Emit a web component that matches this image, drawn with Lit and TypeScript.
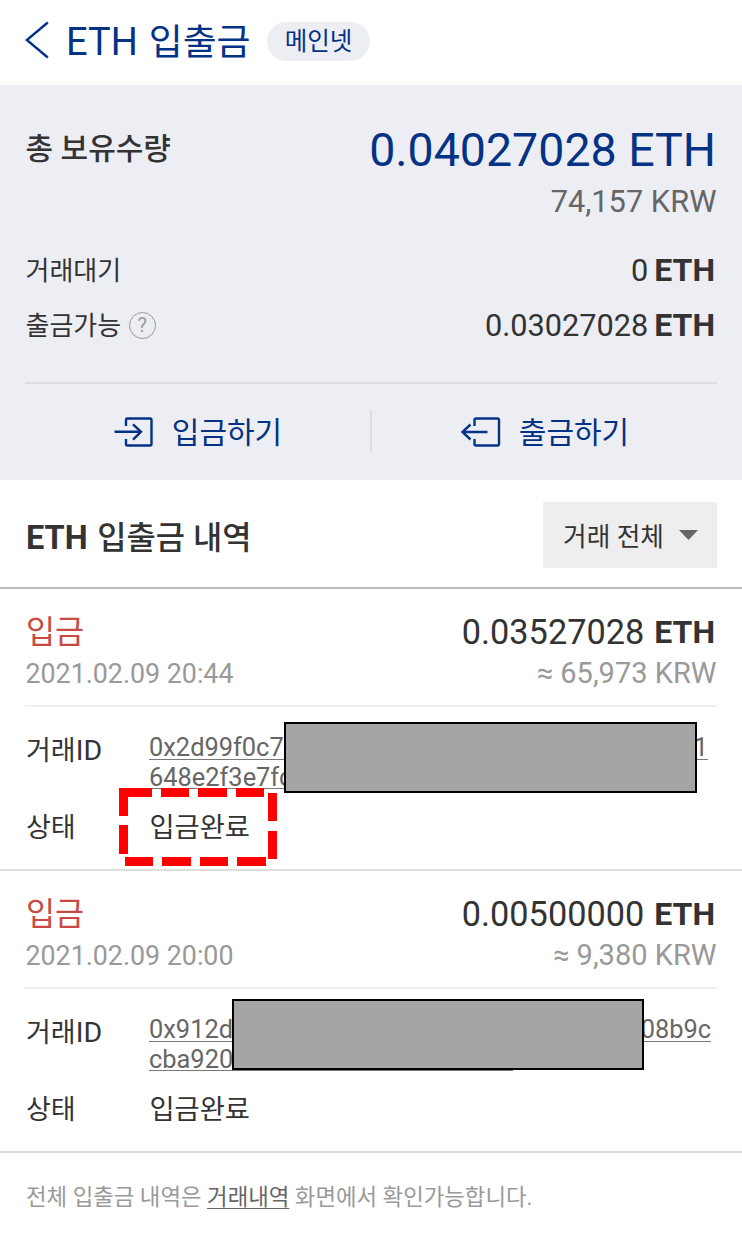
import { LitElement, html, css, svg } from "lit";
import { customElement, property } from "lit/decorators.js";

interface Transfer {
  kind: string;
  time: string;
  amount: string;
  krw: string;
  idHead: string;
  idTail: string;
  idRest: string;
  status: string;
  mask: "first" | "second";
  marked: boolean;
}

const transfers: Transfer[] = [
  {
    kind: "입금",
    time: "2021.02.09 20:44",
    amount: "0.03527028",
    krw: "≈ 65,973 KRW",
    idHead: "0x2d99f0c7",
    idTail: "1",
    idRest: "648e2f3e7fc",
    status: "입금완료",
    mask: "first",
    marked: true,
  },
  {
    kind: "입금",
    time: "2021.02.09 20:00",
    amount: "0.00500000",
    krw: "≈ 9,380 KRW",
    idHead: "0x912d",
    idTail: "08b9c",
    idRest: "cba920",
    status: "입금완료",
    mask: "second",
    marked: false,
  },
];

const base = css`
  * {
    box-sizing: border-box;
  }
  :host {
    display: block;
    font-family: Roboto, "Noto Sans CJK KR", sans-serif;
    color: #333;
  }
  .unit {
    font-weight: 700;
    font-size: 32px;
  }
`;

@customElement("transfer-item")
export class TransferItem extends LitElement {
  @property({ attribute: false }) item!: Transfer;

  static styles = [
    base,
    css`
      .item {
        position: relative;
        height: 282px;
        padding: 0 25px;
        border-bottom: 2px solid #ddd;
      }
      .head {
        height: 118px;
        padding-top: 23px;
        border-bottom: 2px solid #eee;
      }
      .line {
        display: flex;
        justify-content: space-between;
        white-space: nowrap;
      }
      .main {
        height: 40px;
        line-height: 40px;
      }
      .sub {
        height: 42px;
        line-height: 42px;
        color: #999;
      }
      .kind {
        font-size: 31.6px;
        line-height: 42px;
        color: #c84a43;
        padding-left: 1px;
      }
      .amount {
        display: flex;
        gap: 10px;
        font-size: 34.3px;
        line-height: 41px;
        padding-right: 2px;
      }
      .time {
        font-size: 26.8px;
        line-height: 44px;
        padding-left: 0.5px;
      }
      .krw {
        font-size: 29px;
        padding-right: 0.5px;
      }
      .detail {
        display: grid;
        grid-template-columns: 124px 1fr;
        white-space: nowrap;
      }
      .label {
        font-size: 27px;
        line-height: 41px;
        padding-left: 1px;
      }
      .label .latin {
        font-size: 28.5px;
      }
      .id {
        padding-top: 23px;
        height: 100px;
      }
      .hash {
        font-size: 25.4px;
        color: #666;
      }
      .row {
        display: flex;
        justify-content: space-between;
        height: 29.5px;
        line-height: 35px;
        border-bottom: 1.3px solid #777;
      }
      .row.first {
        width: 559px;
      }
      .row.second {
        width: 562px;
      }
      .row.rest {
        width: 364px;
      }
      .state .label,
      .value {
        line-height: 42px;
      }
      .value {
        font-size: 27.3px;
        padding-left: 0.5px;
      }
      .mask {
        position: absolute;
        height: 71px;
        border: 2px solid #000;
        background: #a5a5a5;
      }
      .mask.first {
        left: 284px;
        top: 133px;
        width: 413px;
      }
      .mask.second {
        left: 232px;
        top: 128px;
        width: 412px;
      }
      .mark {
        position: absolute;
        left: 119px;
        top: 199px;
      }
    `,
  ];

  render() {
    const t = this.item;
    return html`
      <article class="item">
        <div class="head">
          <div class="line main">
            <span class="kind">${t.kind}</span>
            <span class="amount"><span>${t.amount}</span><span class="unit">ETH</span></span>
          </div>
          <div class="line sub">
            <span class="time">${t.time}</span><span class="krw">${t.krw}</span>
          </div>
        </div>
        <div class="detail id">
          <span class="label">거래<span class="latin">ID</span></span>
          <div class="hash">
            <div class="row ${t.mask}"><span>${t.idHead}</span><span>${t.idTail}</span></div>
            <div class="row rest"><span>${t.idRest}</span></div>
          </div>
        </div>
        <div class="detail state">
          <span class="label">상태</span><span class="value">${t.status}</span>
        </div>
        <div class="mask ${t.mask}"></div>
        ${t.marked
          ? html`<svg class="mark" width="158" height="78" viewBox="0 0 158 78">
              <path
                fill="#f00"
                d="M0 0H33V9H9V28H0ZM42 0H70V9H42ZM79 0H108V9H79ZM117 0H145V9H117ZM149 5H158V33H149ZM149 43H158V71H149ZM118 69H147V78H118ZM81 69H109V78H81ZM43 69H72V78H43ZM6 69H34V78H6ZM0 37H9V66H0Z"
              />
            </svg>`
          : null}
      </article>
    `;
  }
}

@customElement("app-root")
export class AppRoot extends LitElement {
  static styles = [
    base,
    css`
      :host {
        width: 742px;
        height: 1250px;
        background: #fff;
        overflow: hidden;
        white-space: nowrap;
      }
      svg {
        display: block;
        flex: none;
      }
      .stroke {
        fill: none;
        stroke: #043285;
        stroke-width: 2.4;
      }
      header {
        display: flex;
        align-items: center;
        height: 85px;
        padding: 0 0 3px 25px;
        color: #043285;
      }
      .chevron {
        margin-bottom: 3px;
      }
      .title {
        margin-left: 17px;
        font-size: 38px;
        line-height: 50px;
        width: 202px;
        padding-top: 2px;
      }
      .title .ko {
        font-size: 36.9px;
        margin-left: 1.5px;
      }
      .net {
        height: 39px;
        width: 103px;
        border-radius: 20px;
        background: #edeef4;
        text-align: center;
        font-size: 24.5px;
        line-height: 40px;
        margin-left: -1px;
      }
      .summary {
        background: #edeef4;
        height: 395px;
        padding: 34px 25px 0;
      }
      .line {
        display: flex;
        justify-content: space-between;
        align-items: center;
      }
      .total {
        height: 60px;
        line-height: 60px;
      }
      .total-label {
        font-size: 30px;
        font-weight: 500;
        padding-left: 0.5px;
      }
      .total-value {
        font-size: 46.5px;
        color: #043285;
        padding: 1px 1px 0 0;
      }
      .krw {
        height: 44px;
        line-height: 45px;
        font-size: 30.8px;
        color: #666;
        text-align: right;
        padding-right: 0.5px;
      }
      .wait {
        margin-top: 20px;
      }
      .sum {
        height: 55px;
        line-height: 55px;
      }
      .sum-label {
        font-size: 26px;
        display: flex;
        align-items: center;
        padding-left: 0.5px;
      }
      .sum-text {
        line-height: 58px;
      }
      .sum-value {
        display: flex;
        gap: 6px;
        font-size: 30.7px;
        padding-right: 2px;
      }
      .help {
        width: 27px;
        height: 27px;
        border: 1.6px solid #999;
        border-radius: 50%;
        color: #999;
        font-size: 20px;
        line-height: 25px;
        text-align: center;
        margin-left: 7.5px;
      }
      .actions {
        margin-top: 29px;
        border-top: 2px solid #ddd;
        height: 97px;
        display: flex;
        align-items: center;
      }
      .action {
        flex: 1;
        display: flex;
        justify-content: center;
        align-items: center;
        gap: 18px;
        color: #043285;
        font-size: 30px;
        line-height: 40px;
        padding-left: 1px;
      }
      .action-text {
        padding-top: 3px;
      }
      .split {
        width: 2px;
        height: 43px;
        background: #ddd;
      }
      .history {
        display: flex;
        justify-content: space-between;
        align-items: center;
        height: 109px;
        padding: 2px 25px 0;
        border-bottom: 2px solid #bbb;
      }
      .history-title {
        font-size: 32.5px;
        font-weight: 700;
        padding-left: 1px;
      }
      .history-title .ko {
        font-size: 31.8px;
        font-weight: 500;
        margin-left: 1.5px;
      }
      .filter {
        display: flex;
        align-items: center;
        justify-content: space-between;
        width: 174px;
        height: 66px;
        padding: 0 19px 0 20px;
        background: #eee;
        font-size: 25.7px;
      }
      footer {
        padding: 24px 26px 0;
        font-size: 22.35px;
        line-height: 40px;
        color: #999;
      }
      .link {
        color: #666;
        text-decoration: underline;
        text-decoration-thickness: 1px;
        text-decoration-skip-ink: none;
        text-underline-offset: 3px;
      }
    `,
  ];

  render() {
    return html`
      <header>
        <svg class="chevron" width="24" height="38" viewBox="0 0 24 38">
          <path class="stroke" d="M22.8 1.5 1.8 19l21 17.5" />
        </svg>
        <div class="title">ETH <span class="ko">입출금</span></div>
        <div class="net">메인넷</div>
      </header>
      <section class="summary">
        <div class="line total">
          <span class="total-label">총 보유수량</span>
          <span class="total-value">0.04027028 ETH</span>
        </div>
        <div class="krw">74,157 KRW</div>
        <div class="line sum wait">
          <span class="sum-label"><span class="sum-text">거래대기</span></span>
          <span class="sum-value">0<span class="unit">ETH</span></span>
        </div>
        <div class="line sum">
          <span class="sum-label"><span class="sum-text">출금가능</span><span class="help">?</span></span>
          <span class="sum-value">0.03027028<span class="unit">ETH</span></span>
        </div>
        <div class="actions">
          <div class="action">
            <svg width="40" height="32" viewBox="0 0 40 32">${svg`
              <path class="stroke" d="M12 10V4q0-1.5 1.5-1.5H36q1.5 0 1.5 1.5V28q0 1.5-1.5 1.5H13.5Q12 29.5 12 28V23M.5 15.8H27M19 8.3l8 7.5-8 7.9" />`}
            </svg>
            <span class="action-text">입금하기</span>
          </div>
          <div class="split"></div>
          <div class="action">
            <svg width="40" height="32" viewBox="0 0 40 32">${svg`
              <path class="stroke" d="M13.5 10V4q0-1.5 1.5-1.5H36.5q1.5 0 1.5 1.5V28q0 1.5-1.5 1.5H15q-1.5 0-1.5-1.5V23M26.5 16H1.5M9.5 8.5l-8 7.5 8 7.5" />`}
            </svg>
            <span class="action-text">출금하기</span>
          </div>
        </div>
      </section>
      <section class="history">
        <div class="history-title">ETH <span class="ko">입출금 내역</span></div>
        <div class="filter">
          <span>거래 전체</span>
          <svg width="19" height="10" viewBox="0 0 19 10"><path fill="#666" d="M0 0H19L9.5 10Z" /></svg>
        </div>
      </section>
      ${transfers.map((t) => html`<transfer-item .item=${t}></transfer-item>`)}
      <footer>전체 입출금 내역은 <span class="link">거래내역</span> 화면에서 확인가능합니다.</footer>
    `;
  }
}
